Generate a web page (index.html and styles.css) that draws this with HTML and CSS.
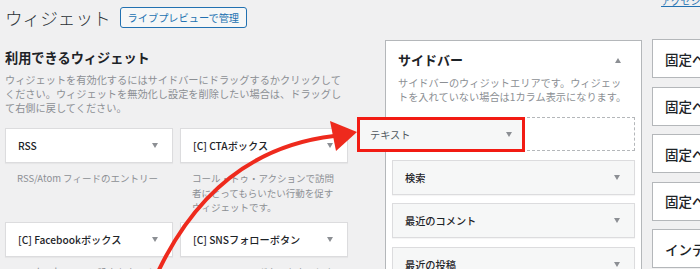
FILE: index.html
```html
<!DOCTYPE html>
<html lang="ja">
<head>
    <meta charset="UTF-8">
    <meta name="viewport" content="width=device-width, initial-scale=1.0">
    <title>ウィジェット</title>
    <link rel="stylesheet" href="styles.css">
</head>
<body>
    <div class="wrap">
        <header class="page-head">
            <h1>ウィジェット</h1>
            <a class="head-btn" href="#">ライブプレビューで管理</a>
            <a class="a11y-link" href="#">アクセシビリティモードを有効にする</a>
        </header>

        <div class="columns">
            <section class="available">
                <h2>利用できるウィジェット</h2>
                <p class="intro">ウィジェットを有効化するにはサイドバーにドラッグするかクリックしてください。ウィジェットを無効化し設定を削除したい場合は、ドラッグして右側に戻してください。</p>
                <div class="widget-grid">
                    <div class="widget-item">
                        <div class="widget-top"><span>RSS</span><i class="caret"></i></div>
                        <p class="widget-desc">RSS/Atom フィードのエントリー</p>
                    </div>
                    <div class="widget-item">
                        <div class="widget-top"><span>[C] CTAボックス</span><i class="caret"></i></div>
                        <p class="widget-desc">コール・トゥ・アクションで訪問者にとってもらいたい行動を促すウィジェットです。</p>
                    </div>
                    <div class="widget-item">
                        <div class="widget-top"><span>[C] Facebookボックス</span><i class="caret"></i></div>
                        <p class="widget-desc">Facebookページの設定を表示するウィジェット</p>
                    </div>
                    <div class="widget-item">
                        <div class="widget-top"><span>[C] SNSフォローボタン</span><i class="caret"></i></div>
                        <p class="widget-desc">SNSのフォローボタンを表示します。</p>
                    </div>
                </div>
            </section>

            <section class="sidebar-panel">
                <div class="panel-head">
                    <h3>サイドバー</h3>
                    <i class="caret up"></i>
                </div>
                <p class="panel-desc">サイドバーのウィジットエリアです。ウィジェットを入れていない場合は1カラム表示になります。</p>
                <div class="panel-widgets">
                    <div class="drop-slot"></div>
                    <div class="widget-top"><span>検索</span><i class="caret"></i></div>
                    <div class="widget-top"><span>最近のコメント</span><i class="caret"></i></div>
                    <div class="widget-top"><span>最近の投稿</span><i class="caret"></i></div>
                </div>
            </section>

            <section class="more-sidebars">
                <div class="sidebar-box">固定ページタイトル上</div>
                <div class="sidebar-box">固定ページ本文上</div>
                <div class="sidebar-box">固定ページ本文中</div>
                <div class="sidebar-box">固定ページ本文下</div>
                <div class="sidebar-box">インデックスリスト トップ</div>
            </section>
        </div>

        <!-- widget being dragged, with the red annotation frame -->
        <div class="dragging"><span>テキスト</span><i class="caret"></i></div>

        <svg class="arrow" width="700" height="269" viewBox="0 0 700 269">
            <path d="M157 274 Q215 150 334 136" fill="none" stroke="#ee2a1d" stroke-width="4" stroke-linecap="round"/>
            <polygon points="357,132 330,121 336,151" fill="#ee2a1d"/>
        </svg>
    </div>
</body>
</html>
```

FILE: styles.css
```css
:root {
    --bg-color: #f0f0f1;
    --text-color: #1d2327;
    --muted-color: #8c8f94;
    --link-color: #2271b1;
    --border-color: #dcdcde;
    --panel-border: #b4b7ba;
    --mark-color: #f21b13;
}
* {
    margin: 0;
    padding: 0;
    box-sizing: border-box;
}
body {
    background: var(--bg-color);
    color: var(--text-color);
    font-family: "Noto Sans CJK JP", "Noto Sans", sans-serif;
    overflow: hidden;
}
.wrap {
    position: relative;
    width: 1000px;
    height: 269px;
    padding: 7px 0 0 5px;
}

/* header */
.page-head {
    display: flex;
    align-items: center;
    height: 21px;
}
.page-head h1 {
    font-size: 17.6px;
    font-weight: 300;
    line-height: 21px;
    color: #2c3338;
    margin-right: 9px;
}
.head-btn {
    display: inline-flex;
    align-items: center;
    height: 21px;
    padding: 0 7px;
    border: 1px solid var(--link-color);
    border-radius: 3px;
    background: #f6f7f7;
    color: var(--link-color);
    font-size: 10.2px;
    text-decoration: none;
}
.a11y-link {
    align-self: flex-start;
    margin: -14px 0 0 414px;
    font-size: 10px;
    color: var(--link-color);
    white-space: nowrap;
}

.columns {
    display: flex;
    align-items: flex-start;
    margin-top: 11px;
}

/* available widgets */
.available {
    width: 343px;
    margin-right: 37px;
    padding-top: 10px;
}
.available h2 {
    font-size: 13.2px;
    font-weight: 700;
    line-height: 18px;
}
.intro {
    margin-top: 6px;
    font-size: 10.2px;
    line-height: 14px;
    color: var(--muted-color);
}
.widget-grid {
    display: grid;
    grid-template-columns: 168px 168px;
    column-gap: 7px;
    row-gap: 7.5px;
    margin-top: 13px;
}
.widget-top {
    display: flex;
    align-items: center;
    justify-content: space-between;
    height: 35px;
    padding: 0 14.5px 0 12px;
    border: 1px solid var(--border-color);
    background: #fff;
    box-shadow: 0 1px 1px rgba(0, 0, 0, 0.04);
    font-size: 10.2px;
    font-weight: 500;
    white-space: nowrap;
}
.widget-desc {
    margin-top: 8px;
    padding: 0 10px 0 12px;
    font-size: 9.5px;
    line-height: 14.5px;
    color: var(--muted-color);
}

.caret {
    width: 0;
    height: 0;
    border-left: 3.5px solid transparent;
    border-right: 3.5px solid transparent;
    border-top: 5px solid #8c8f94;
}
.caret.up {
    border-top: none;
    border-bottom: 5px solid #8c8f94;
}

/* sidebar panel */
.sidebar-panel {
    width: 257px;
    height: 240px;
    margin-top: 1px;
    background: #fff;
    border: 1px solid var(--panel-border);
}
.panel-head {
    display: flex;
    align-items: center;
    justify-content: space-between;
    padding: 10px 20px 0 12px;
}
.panel-head h3 {
    font-size: 13px;
    font-weight: 700;
    line-height: 18px;
}
.panel-desc {
    margin-top: 7px;
    padding: 0 12px;
    font-size: 10.2px;
    line-height: 14px;
    color: var(--muted-color);
}
.panel-widgets {
    display: flex;
    flex-direction: column;
    gap: 8.5px;
    margin-top: 13px;
    padding: 0 6px;
}
.drop-slot {
    height: 34px;
    border: 1px dashed #b4b7ba;
}
.panel-widgets .widget-top {
    background: #f6f7f7;
}

/* other sidebars */
.more-sidebars {
    display: flex;
    flex-direction: column;
    gap: 8.5px;
    width: 250px;
    margin-left: 10px;
}
.sidebar-box {
    display: flex;
    align-items: center;
    height: 39px;
    padding-left: 12px;
    background: #fff;
    border: 1px solid var(--panel-border);
    font-size: 13.5px;
    font-weight: 500;
    white-space: nowrap;
}

/* drag annotation */
.dragging {
    position: absolute;
    left: 357px;
    top: 117px;
    width: 168px;
    height: 35px;
    display: flex;
    align-items: center;
    justify-content: space-between;
    padding: 0 10.5px 0 10px;
    border: 3px solid var(--mark-color);
    background: #f6f7f7;
    color: #50575e;
    font-size: 10.2px;
}
.arrow {
    position: absolute;
    left: 0;
    top: 0;
}
```
